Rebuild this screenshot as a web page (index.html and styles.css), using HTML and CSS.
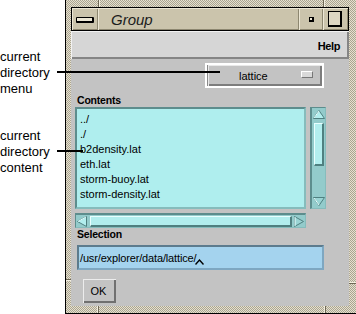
FILE: index.html
```html
<!DOCTYPE html>
<html>
<head>
<meta charset="utf-8">
<link rel="stylesheet" href="styles.css">
</head>
<body>
<div class="stage">
  <div class="callout callout-menu">current<br>directory<br>menu</div>
  <div class="leader leader-menu"></div>
  <div class="callout callout-content">current<br>directory<br>content</div>
  <div class="leader leader-content"></div>

  <div class="window">
    <span class="notch notch-top1"></span>
    <span class="notch notch-top2"></span>
    <span class="notch notch-bot1"></span>
    <span class="notch notch-bot2"></span>
    <span class="notch notch-left"></span>
    <span class="notch notch-right"></span>
    <div class="inner">
      <div class="titlebar">
        <div class="tb-cell tb-menu"><span class="menu-icon"></span></div>
        <div class="tb-cell tb-title">Group</div>
        <div class="tb-cell tb-min"><span class="min-icon"></span></div>
        <div class="tb-cell tb-max"><span class="max-icon"></span></div>
      </div>
      <div class="menubar"><span class="help">Help</span></div>
      <div class="panel">
        <div class="option-row">
          <div class="option">
            <div class="option-btn">
              <span class="option-label">lattice</span>
              <span class="option-ind"></span>
            </div>
          </div>
        </div>
        <div class="label">Contents</div>
        <div class="list-row">
          <div class="list">
            <div class="item">../</div>
            <div class="item">./</div>
            <div class="item">b2density.lat</div>
            <div class="item">eth.lat</div>
            <div class="item">storm-buoy.lat</div>
            <div class="item">storm-density.lat</div>
          </div>
          <div class="vscroll">
            <svg class="arrow" width="12" height="9" viewBox="0 0 12 9"><polygon points="6,0.5 11.5,8.5 0.5,8.5" fill="#b2eeee" stroke="#4f8080" stroke-width="1"/><line x1="6" y1="1" x2="1" y2="8" stroke="#e8ffff"/></svg>
            <div class="vthumb"></div>
            <div class="vspace"></div>
            <svg class="arrow" width="12" height="9" viewBox="0 0 12 9"><polygon points="0.5,0.5 11.5,0.5 6,8.5" fill="#9ad4d4" stroke="#4f8080" stroke-width="1"/><line x1="1" y1="1" x2="6" y2="8" stroke="#e8ffff"/></svg>
          </div>
        </div>
        <div class="hscroll">
          <svg class="harrow" width="10" height="11" viewBox="0 0 10 11"><polygon points="0.5,5.5 9.5,0.5 9.5,10.5" fill="#b2eeee" stroke="#4f8080" stroke-width="1"/><line x1="1" y1="5.5" x2="9" y2="1" stroke="#e8ffff"/></svg>
          <div class="hthumb"></div>
          <svg class="harrow" width="10" height="11" viewBox="0 0 10 11"><polygon points="0.5,0.5 9.5,5.5 0.5,10.5" fill="#9ad4d4" stroke="#4f8080" stroke-width="1"/><line x1="1" y1="1" x2="1" y2="10" stroke="#e8ffff"/></svg>
        </div>
        <div class="label">Selection</div>
        <div class="field"><span class="field-text">/usr/explorer/data/lattice/</span><svg class="caret" width="9" height="6" viewBox="0 0 9 6"><polyline points="0.5,5.5 4.5,1 8.5,5.5" fill="none" stroke="#000" stroke-width="1.4"/></svg></div>
        <div class="ok-row"><button class="ok">OK</button></div>
      </div>
    </div>
  </div>
</div>
</body>
</html>
```
FILE: styles.css
```css
html, body {
  margin: 0;
  padding: 0;
  background: #fff;
}
body {
  font-family: "Liberation Sans", Arial, sans-serif;
  color: #000;
}
.stage {
  position: relative;
  width: 356px;
  height: 314px;
  overflow: hidden;
  display: flex;
  justify-content: flex-end;
}

/* callouts */
.callout {
  position: absolute;
  left: 0;
  font-size: 13px;
  line-height: 16px;
  color: #000;
}
.callout-menu { top: 49px; }
.callout-content { top: 128px; }
.leader {
  position: absolute;
  height: 2px;
  background: #000;
  z-index: 5;
}
.leader-menu { left: 57px; top: 71px; width: 163px; }
.leader-content { left: 57px; top: 150px; width: 26px; }

/* window frame */
.window {
  position: relative;
  width: 291px;
  height: 314px;
  box-sizing: border-box;
  border-left: 1px solid #000;
  border-bottom: 1px solid #000;
  padding: 7px 7px 7px 5px;
  background: repeating-conic-gradient(#e6e1cf 0 25%, #aaa491 0 50%) 0 0 / 2px 2px;
  display: flex;
}
.notch {
  position: absolute;
  background: #6e6856;
}
.notch-top1 { left: 32px; top: 0; width: 1px; height: 7px; box-shadow: 1px 0 0 #f2eedf; }
.notch-top2 { left: 257px; top: 0; width: 1px; height: 7px; box-shadow: 1px 0 0 #f2eedf; }
.notch-bot1 { left: 31px; bottom: 0; width: 1px; height: 7px; background: #f2eedf; box-shadow: 1px 0 0 #6e6856; }
.notch-bot2 { left: 258px; bottom: 0; width: 1px; height: 7px; background: #f2eedf; box-shadow: 1px 0 0 #6e6856; }
.notch-left { left: 0; top: 279px; width: 5px; height: 1px; box-shadow: 0 1px 0 #f2eedf; }
.notch-right { right: 0; top: 282px; width: 7px; height: 1px; background: #f2eedf; box-shadow: 0 1px 0 #6e6856; }

.inner {
  flex: 1;
  display: flex;
  flex-direction: column;
  background: #c3c3c3;
}

/* title bar */
.titlebar {
  height: 24px;
  box-sizing: border-box;
  border: 1px solid #000;
  display: flex;
  background: #cbc4ac;
}
.tb-cell {
  box-shadow: inset 1px 1px 0 #ece7d5, inset -1px -1px 0 #8d8770;
  display: flex;
  align-items: center;
}
.tb-menu {
  width: 26px;
  justify-content: center;
}
.menu-icon {
  width: 15px;
  height: 3px;
  background: #ece7d5;
  border: 1px solid #000;
  border-bottom-width: 2px;
  border-right-width: 2px;
  border-radius: 1px;
  margin-top: 1px;
}
.tb-title {
  flex: 1;
  padding-left: 13px;
  font-style: italic;
  font-size: 15px;
  color: #1c1c1c;
}
.tb-min {
  width: 24px;
  justify-content: center;
}
.min-icon {
  width: 2px;
  height: 2px;
  border: 1px solid #000;
  border-right-width: 2px;
  border-bottom-width: 2px;
  background: #ece7d5;
}
.tb-max {
  width: 25px;
  justify-content: center;
}
.max-icon {
  width: 11px;
  height: 13px;
  border: 1px solid #000;
  border-right-width: 2px;
  border-bottom-width: 2px;
  background: #ddd7c3;
  margin-left: -1px;
}

/* menubar */
.menubar {
  height: 28px;
  box-sizing: border-box;
  background: #d6d6d6;
  box-shadow: inset 1px 1px 0 #f2f2f2, inset -2px -2px 0 #858585;
  display: flex;
  align-items: center;
  justify-content: flex-end;
  padding-right: 9px;
}
.help {
  font-weight: bold;
  font-size: 11px;
  letter-spacing: -0.4px;
  margin-top: 1px;
}

/* panel */
.panel {
  flex: 1;
  display: flex;
  flex-direction: column;
  align-items: flex-start;
}
.option-row {
  align-self: stretch;
  display: flex;
  justify-content: flex-end;
  margin-top: 4px;
  padding-right: 25px;
}
.option {
  width: 119px;
  height: 25px;
  box-sizing: border-box;
  border: 2px solid #fff;
  display: flex;
}
.option-btn {
  flex: 1;
  display: flex;
  align-items: center;
  padding-left: 31px;
  background: #c3c3c3;
  box-shadow: inset 1px 1px 0 #e9e9e9, inset -2px -2px 0 #7d7d7d;
  border-left: 1px solid #8a8a8a;
}
.option-label {
  flex: 1;
  font-size: 11px;
}
.option-ind {
  width: 10px;
  height: 5px;
  background: #d9d9d9;
  border-top: 1px solid #fff;
  border-left: 1px solid #fff;
  border-right: 1px solid #777;
  border-bottom: 1px solid #777;
  margin-right: 9px;
  margin-top: -2px;
}
.label {
  height: 13px;
  line-height: 13px;
  font-size: 10.5px;
  font-weight: bold;
  margin-left: 6px;
  letter-spacing: -0.2px;
}
.option-row + .label { margin-top: 6px; }

.list-row {
  display: flex;
  margin-left: 4px;
}
.list {
  width: 231px;
  height: 102px;
  box-sizing: border-box;
  background: #afeeee;
  border-top: 2px solid #5d8d8d;
  border-left: 2px solid #5d8d8d;
  border-right: 2px solid #86bcbc;
  border-bottom: 2px solid #86bcbc;
  padding: 3px 0 0 3px;
}
.item {
  font-size: 11px;
  line-height: 15px;
  height: 15px;
  white-space: nowrap;
}
.vscroll {
  width: 16px;
  height: 102px;
  box-sizing: border-box;
  margin-left: 4px;
  background: #93cbcb;
  border-top: 1px solid #5d8d8d;
  border-left: 2px solid #5d8d8d;
  border-right: 1px solid #86bcbc;
  border-bottom: 1px solid #86bcbc;
  display: flex;
  flex-direction: column;
  align-items: center;
  padding: 2px 0;
}
.arrow { display: block; flex: none; }
.vthumb {
  margin-top: 4px;
  width: 10px;
  height: 43px;
  box-sizing: border-box;
  background: #b2eeee;
  border-top: 1px solid #e8ffff;
  border-left: 1px solid #e8ffff;
  border-right: 2px solid #4f8080;
  border-bottom: 2px solid #4f8080;
  margin-left: 1px;
}
.vspace { flex: 1; }

.hscroll {
  width: 231px;
  height: 15px;
  box-sizing: border-box;
  margin: 4px 0 0 4px;
  background: #93cbcb;
  border-top: 2px solid #5d8d8d;
  border-left: 1px solid #5d8d8d;
  border-right: 1px solid #86bcbc;
  border-bottom: 1px solid #86bcbc;
  display: flex;
  align-items: center;
  padding: 0 1px 0 1px;
}
.harrow { display: block; flex: none; }
.hthumb {
  flex: 1;
  height: 11px;
  box-sizing: border-box;
  margin: 0 2px 0 3px;
  background: #b2eeee;
  border-top: 1px solid #e8ffff;
  border-left: 1px solid #e8ffff;
  border-right: 2px solid #4f8080;
  border-bottom: 2px solid #4f8080;
}
.hscroll + .label { margin-top: 0; }

.field {
  width: 247px;
  height: 25px;
  box-sizing: border-box;
  margin: 4px 0 0 6px;
  background: #a4d3ee;
  border-top: 2px solid #5c7b8d;
  border-left: 2px solid #5c7b8d;
  border-right: 2px solid #7ea7c1;
  border-bottom: 2px solid #7ea7c1;
  display: flex;
  align-items: center;
  padding-left: 1px;
}
.field-text {
  font-size: 11px;
  letter-spacing: -0.15px;
}
.caret {
  display: block;
  margin: 9px 0 0 -1px;
}
.ok-row {
  margin: 9px 0 0 12px;
}
.ok {
  width: 33px;
  height: 24px;
  padding: 0 2px 0 0;
  margin: 0;
  font-family: "Liberation Sans", Arial, sans-serif;
  font-size: 11px;
  color: #000;
  background: #c3c3c3;
  border: none;
  border-radius: 0;
  box-shadow: inset 1px 1px 0 #ececec, inset -2px -2px 0 #707070;
}
```
